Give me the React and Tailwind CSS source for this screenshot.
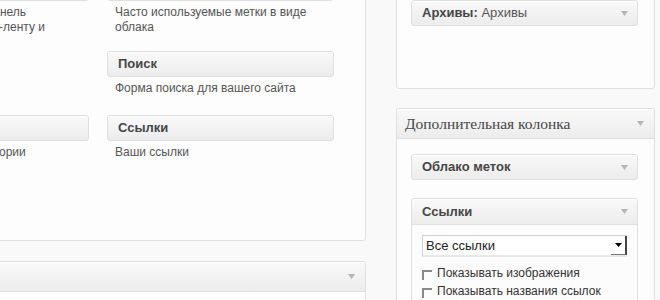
import React from "react";

const sans = { fontFamily: '"Liberation Sans", Arial, sans-serif' };

function Arrow({ className = "" }) {
  return (
    <svg width="7" height="5" viewBox="0 0 7 5" className={className}>
      <path d="M0 0 L7 0 L3.5 5 Z" fill="#b5b5b5" />
    </svg>
  );
}

function WidgetHead({ children, arrow = false, open = false }) {
  return (
    <div
      className={`h-[26px] flex items-center justify-between pl-[10px] pr-[9px] border border-[#dfdfdf] bg-gradient-to-b from-[#f9f9f9] to-[#ececec] shadow-[inset_0_1px_0_#fff] text-[13px] font-bold text-[#464646] ${
        open ? "rounded-t-[3px]" : "rounded-[3px]"
      }`}
    >
      <span>{children}</span>
      {arrow && <Arrow />}
    </div>
  );
}

function Desc({ children }) {
  return (
    <div className="pl-[8px] pt-[4px] text-[12px] leading-[15px] text-[#555]">
      {children}
    </div>
  );
}

export default function App() {
  return (
    <div
      className="w-[660px] h-[300px] overflow-hidden bg-[#f9f9f9] flex"
      style={sans}
    >
      {/* Left area */}
      <div className="w-[366px] shrink-0 flex flex-col">
        <div className="mt-[-40px] ml-[-150px] w-[516px] h-[281px] shrink-0 bg-[#fdfdfd] border border-[#dfdfdf] rounded-[3px] pt-[14px] pl-[11px] flex gap-[18px]">
          <div className="w-[227px] flex flex-col">
            <WidgetHead>Мета</WidgetHead>
            <Desc>
              Войти/выйти, админ-панель
              <br />
              ссылки, записей и RSS-ленту и
            </Desc>
            <div className="mt-[80px]">
              <WidgetHead>Рубрики</WidgetHead>
            </div>
            <Desc>Список или меню категории</Desc>
          </div>
          <div className="w-[227px] flex flex-col">
            <WidgetHead>Облако меток</WidgetHead>
            <Desc>
              Часто используемые метки в виде
              <br />
              облака
            </Desc>
            <div className="mt-[16px]">
              <WidgetHead>Поиск</WidgetHead>
            </div>
            <Desc>Форма поиска для вашего сайта</Desc>
            <div className="mt-[19px]">
              <WidgetHead>Ссылки</WidgetHead>
            </div>
            <Desc>Ваши ссылки</Desc>
          </div>
        </div>
        <div className="mt-[20px] ml-[-150px] w-[516px] h-[60px] shrink-0 bg-[#fdfdfd] border border-[#dfdfdf] rounded-t-[3px]">
          <div className="h-[30px] flex items-center justify-end pr-[10px] border-b border-[#dfdfdf] bg-gradient-to-b from-[#f9f9f9] to-[#ececec] shadow-[inset_0_1px_0_#fff] rounded-t-[3px]">
            <Arrow />
          </div>
        </div>
      </div>

      {/* Right sidebar */}
      <div className="ml-[30px] w-[259px] shrink-0 flex flex-col">
        <div className="mt-[-20px] h-[109px] shrink-0 bg-[#fdfdfd] border border-[#dfdfdf] rounded-[3px] pt-[19px] pl-[14px]">
          <div className="w-[227px]">
            <WidgetHead arrow>
              <span>Архивы:</span>
              <span className="font-normal text-[#555]"> Архивы</span>
            </WidgetHead>
          </div>
        </div>
        <div className="mt-[19px] h-[200px] shrink-0 bg-[#fdfdfd] border border-[#dfdfdf] rounded-t-[3px]">
          <div className="h-[30px] flex items-center justify-between pl-[8px] pr-[10px] border-b border-[#dfdfdf] bg-gradient-to-b from-[#f9f9f9] to-[#ececec] shadow-[inset_0_1px_0_#fff] rounded-t-[3px]">
            <span
              className="text-[15.5px] text-[#464646]"
              style={{ fontFamily: '"Liberation Serif", Georgia, serif' }}
            >
              Дополнительная колонка
            </span>
            <Arrow />
          </div>
          <div className="pl-[14px] pt-[15px] flex flex-col">
            <div className="w-[227px]">
              <WidgetHead arrow>Облако меток</WidgetHead>
            </div>
            <div className="w-[227px] mt-[18px] border border-[#dfdfdf] rounded-[3px] bg-[#fcfcfc]">
              <div className="h-[26px] flex items-center justify-between pl-[10px] pr-[9px] border-b border-[#dfdfdf] bg-gradient-to-b from-[#f9f9f9] to-[#ececec] shadow-[inset_0_1px_0_#fff] text-[13px] font-bold text-[#464646] rounded-t-[3px]">
                <span>Ссылки</span>
                <Arrow />
              </div>
              <div className="px-[10px] pt-[10px] pb-[20px]">
                <div className="h-[22px] flex items-stretch bg-white border-t border-l border-[#d0d0d0] border-b-2 border-b-[#e9e9e9]">
                  <span className="flex-1 flex items-center pl-[3px] text-[13px] text-[#222]">
                    Все ссылки
                  </span>
                  <span className="w-[16px] flex items-center justify-center border-r-2 border-r-[#444] border-b border-b-[#777]">
                    <svg width="7" height="4" viewBox="0 0 7 4">
                      <path d="M0 0 L7 0 L3.5 4 Z" fill="#000" />
                    </svg>
                  </span>
                </div>
                <div className="mt-[9px] flex flex-col gap-[3px] text-[12px] leading-[15px] text-[#333]">
                  <label className="flex items-center gap-[5px]">
                    <span className="w-[10px] h-[10px] border-t-2 border-l-2 border-[#888] mt-[3px]" />
                    <span>Показывать изображения</span>
                  </label>
                  <label className="flex items-center gap-[5px]">
                    <span className="w-[10px] h-[10px] border-t-2 border-l-2 border-[#888] mt-[3px]" />
                    <span>Показывать названия ссылок</span>
                  </label>
                </div>
              </div>
            </div>
          </div>
        </div>
      </div>
    </div>
  );
}
